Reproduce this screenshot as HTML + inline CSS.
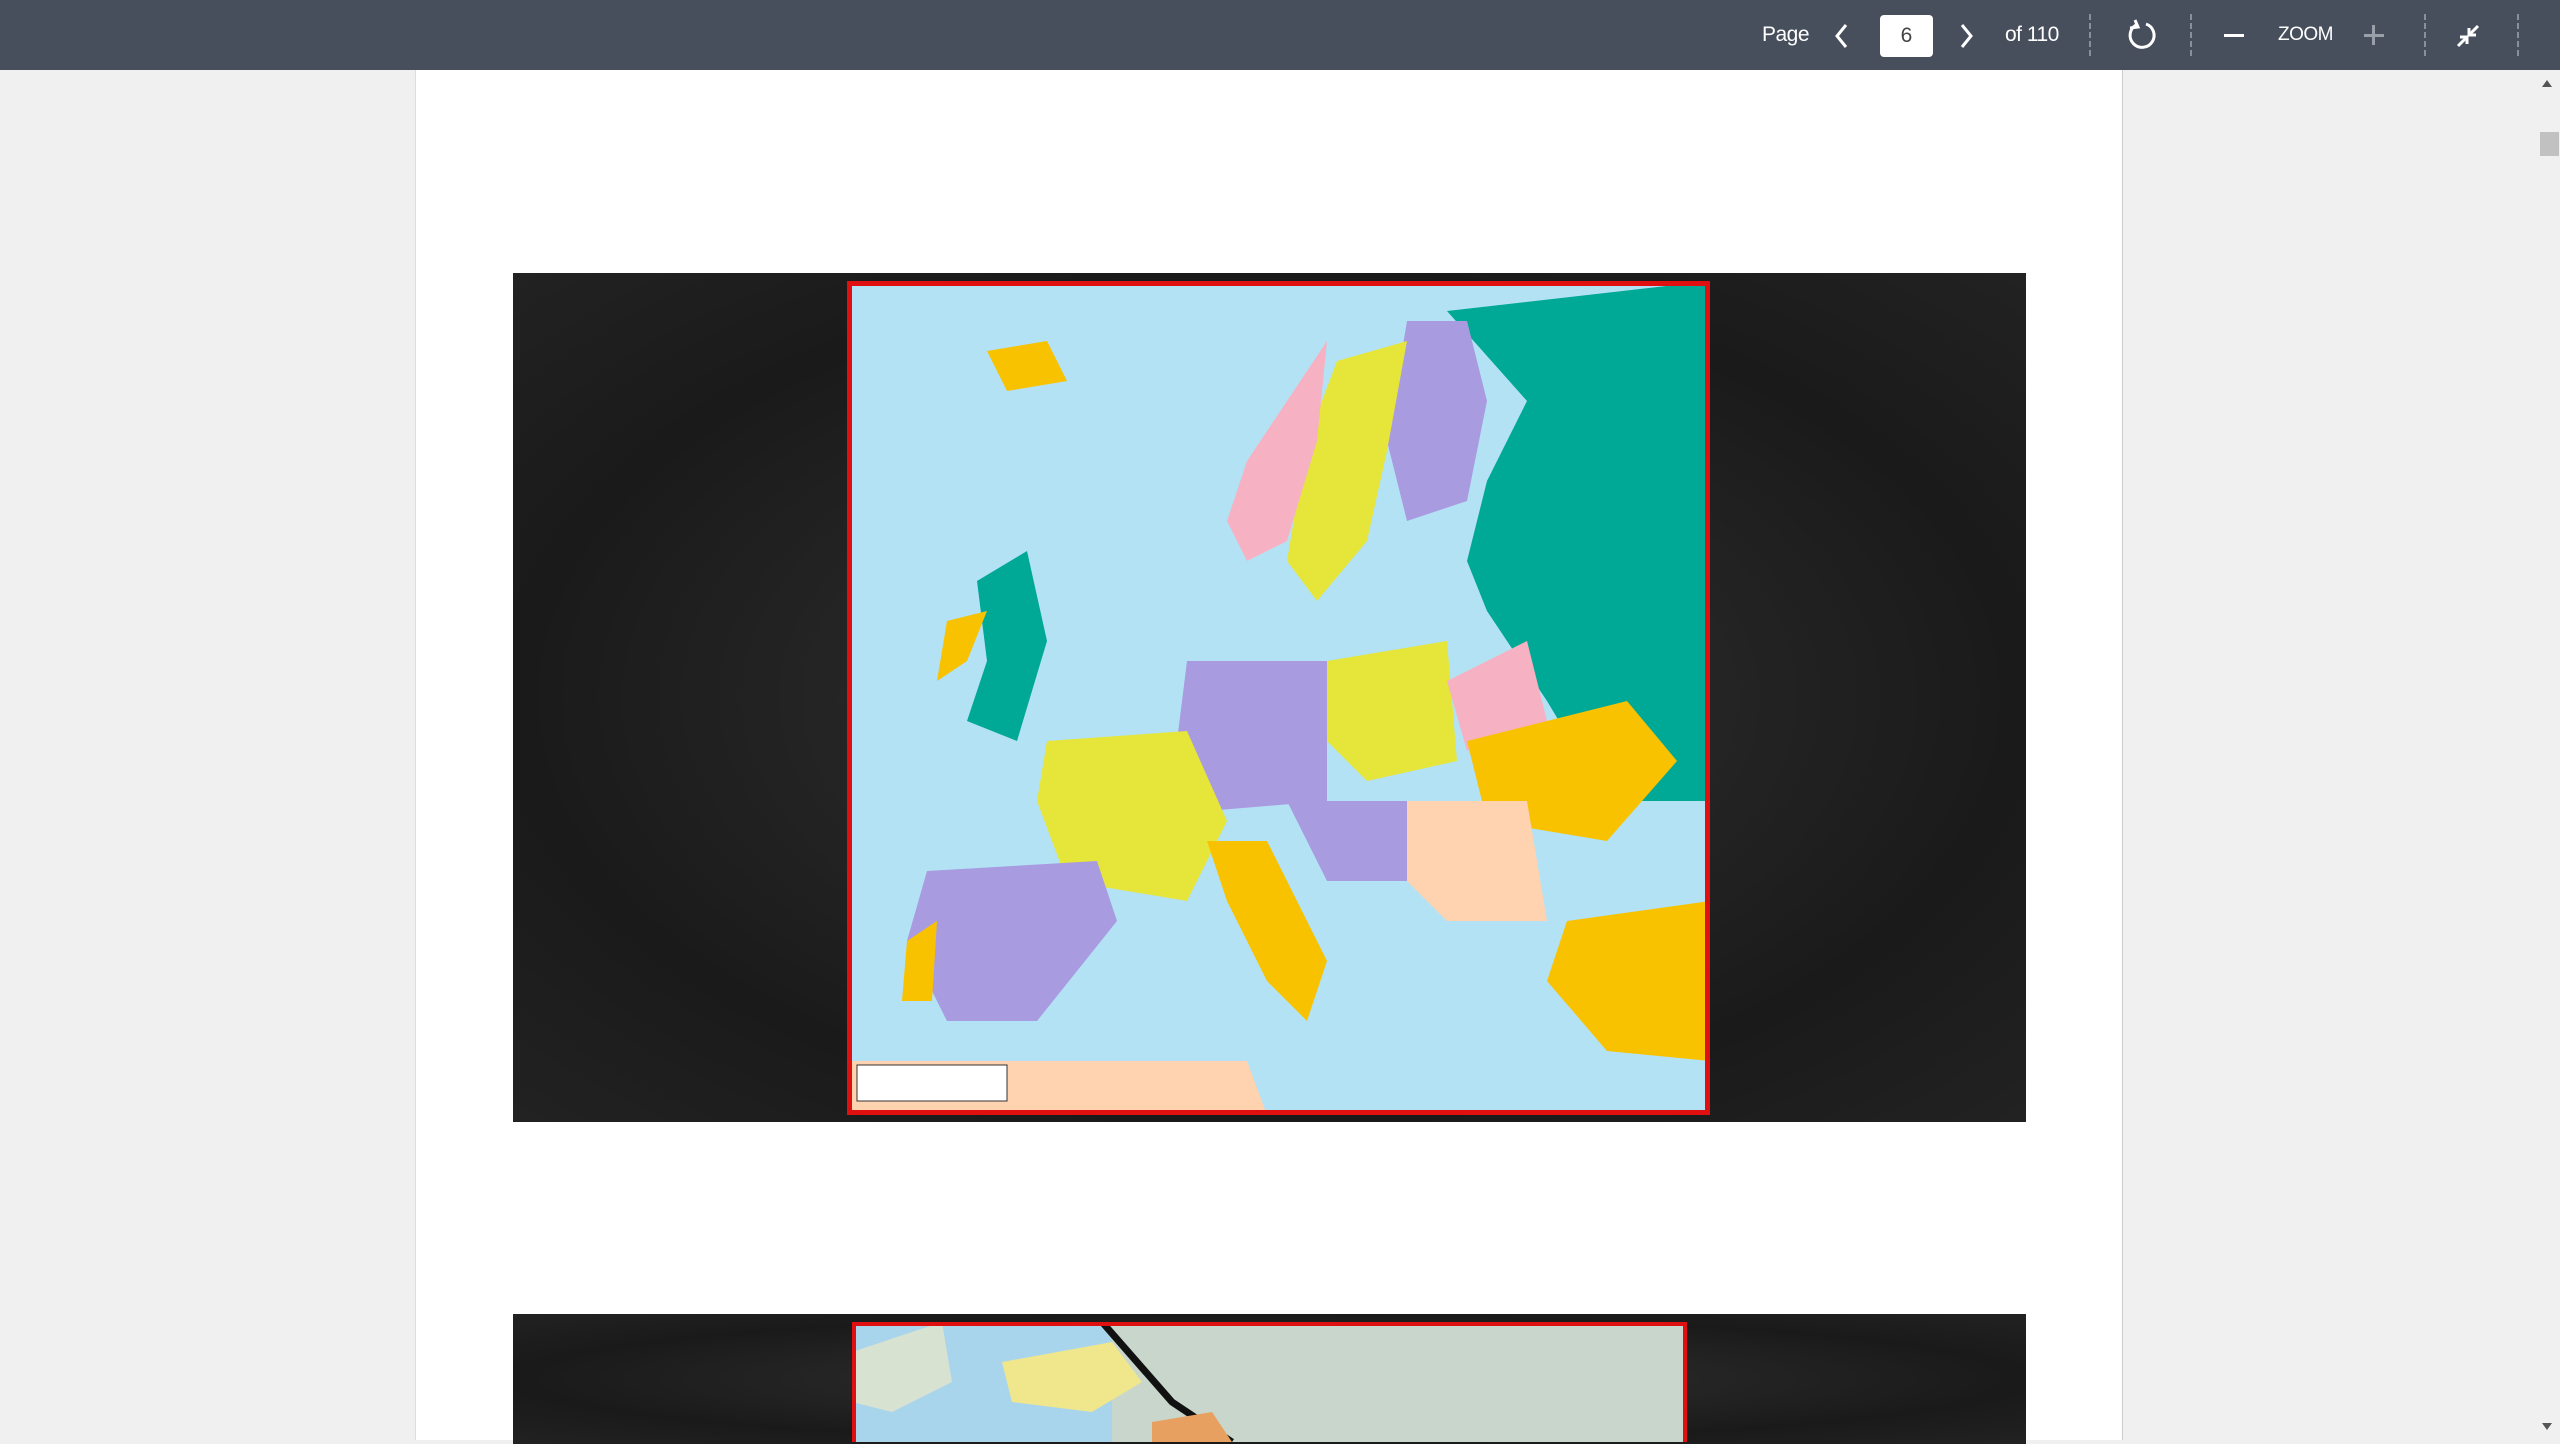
<!DOCTYPE html>
<html><head><meta charset="utf-8"><style>
*{margin:0;padding:0;box-sizing:border-box}
body{width:2560px;height:1440px;overflow:hidden;background:#f0f0f0;font-family:"Liberation Sans",sans-serif;position:relative}
.tb{position:absolute;left:0;top:0;width:2560px;height:70px;background:#474f5c}
.t{position:absolute;color:#fff;font-size:21px;top:23px;letter-spacing:-0.5px}
.dv{position:absolute;top:14px;height:42px;border-left:2px dashed #8a909a}
.page{position:absolute;left:415px;top:70px;width:1708px;height:1370px;background:#fff;border-right:1px solid #ccc;border-left:1px solid #ddd}
.dark{position:absolute;background:radial-gradient(ellipse at 50% 50%,#333,#1a1a1a 70%,#222)}
</style></head><body>
<div class="tb">
<div class="t" style="left:1762px">Page</div>
<svg style="position:absolute;left:1832px;top:22px" width="20" height="28"><path d="M14 3 L5 14 L14 25" stroke="#fff" stroke-width="3" fill="none"/></svg>
<div style="position:absolute;left:1880px;top:15px;width:53px;height:42px;background:#fff;border-radius:4px;color:#444;font-size:21px;text-align:center;line-height:42px">6</div>
<svg style="position:absolute;left:1956px;top:22px" width="20" height="28"><path d="M6 3 L15 14 L6 25" stroke="#fff" stroke-width="3" fill="none"/></svg>
<div class="t" style="left:2005px">of 110</div>
<div class="dv" style="left:2089px"></div>
<svg style="position:absolute;left:2126px;top:19px" width="32" height="32"><path d="M10 6 A12 12 0 1 0 20 5" stroke="#fff" stroke-width="3" fill="none"/><path d="M9 1 L12 8 L4 9" stroke="#fff" stroke-width="3" fill="none"/></svg>
<div class="dv" style="left:2190px"></div>
<div style="position:absolute;left:2224px;top:34px;width:20px;height:3px;background:#fff"></div>
<div class="t" style="left:2278px;font-size:19px;top:24px">ZOOM</div>
<div style="position:absolute;left:2364px;top:34px;width:20px;height:3px;background:#9aa0a8"></div>
<div style="position:absolute;left:2372px;top:25px;width:3px;height:20px;background:#9aa0a8"></div>
<div class="dv" style="left:2424px"></div>
<svg style="position:absolute;left:2454px;top:22px" width="28" height="28"><path d="M24 4 L15 13 M15 6 V13 H22 M4 24 L13 15 M6 15 H13 V22" stroke="#fff" stroke-width="3" fill="none"/></svg>
<div class="dv" style="left:2517px"></div>
</div>
<div class="page"></div>
<svg style="position:absolute;left:2540px;top:78px" width="14" height="10"><path d="M2 9 L7 2 L12 9Z" fill="#555"/></svg>
<div style="position:absolute;left:2540px;top:132px;width:19px;height:24px;background:#c1c1c1"></div>
<svg style="position:absolute;left:2540px;top:1422px" width="14" height="10"><path d="M2 1 L7 8 L12 1Z" fill="#555"/></svg>

<div class="dark" style="left:513px;top:273px;width:1513px;height:849px"></div>
<svg style="position:absolute;left:847px;top:281px" width="863" height="834" viewBox="0 0 863 834">
<rect width="863" height="834" fill="#b3e2f5"/>
<path d="M600 30 L863 0 L863 520 L760 520 L700 420 L640 330 L620 280 L640 200 L680 120 Z" fill="#00a896"/>
<path d="M560 40 L620 40 L640 120 L620 220 L560 240 L540 160 Z" fill="#a99be0"/>
<path d="M490 80 L560 60 L540 170 L520 260 L470 320 L440 280 L460 160 Z" fill="#e5e53a"/>
<path d="M400 180 L480 60 L470 160 L440 260 L400 280 L380 240 Z" fill="#f6b2c2"/>
<path d="M130 300 L180 270 L200 360 L170 460 L120 440 L140 380 Z" fill="#00a896"/>
<path d="M140 330 L120 380 L90 400 L100 340 Z" fill="#f8c200"/>
<path d="M340 380 L480 380 L480 520 L360 530 L330 460 Z" fill="#a99be0"/>
<path d="M480 380 L600 360 L610 480 L520 500 L480 460 Z" fill="#e5e53a"/>
<path d="M600 400 L680 360 L700 440 L620 470 Z" fill="#f6b2c2"/>
<path d="M620 460 L780 420 L830 480 L760 560 L640 540 Z" fill="#f8c200"/>
<path d="M200 460 L340 450 L380 540 L340 620 L220 600 L190 520 Z" fill="#e5e53a"/>
<path d="M80 590 L250 580 L270 640 L190 740 L100 740 L60 660 Z" fill="#a99be0"/>
<path d="M60 660 L90 640 L85 720 L55 720 Z" fill="#f8c200"/>
<path d="M360 560 L420 560 L480 680 L460 740 L420 700 L380 620 Z" fill="#f8c200"/>
<path d="M440 520 L560 520 L560 600 L480 600 Z" fill="#a99be0"/>
<path d="M560 520 L680 520 L700 640 L600 640 L560 600 Z" fill="#ffd2b0"/>
<path d="M720 640 L863 620 L863 780 L760 770 L700 700 Z" fill="#f8c200"/>
<path d="M140 70 L200 60 L220 100 L160 110 Z" fill="#f8c200"/>
<path d="M0 780 L400 780 L420 834 L0 834 Z" fill="#ffd2b0"/>
<rect x="10" y="784" width="150" height="36" fill="#fff" stroke="#333"/>
<rect x="2.5" y="2.5" width="858" height="829" fill="none" stroke="#e01010" stroke-width="5"/>
</svg>

<div class="dark" style="left:513px;top:1314px;width:1513px;height:130px"></div>
<svg style="position:absolute;left:852px;top:1322px" width="835" height="120" viewBox="0 0 835 120">
<rect width="835" height="120" fill="#c8d6cc"/>
<rect width="260" height="120" fill="#a8d4ec"/>
<path d="M150 40 L260 20 L290 60 L240 90 L160 80 Z" fill="#f0e68c"/>
<path d="M250 0 L320 80 L380 120" stroke="#111" stroke-width="7" fill="none"/>
<path d="M300 100 L360 90 L380 120 L300 120Z" fill="#e8a060"/>
<path d="M0 30 L90 0 L100 60 L40 90 L0 80Z" fill="#d8e2d0"/>
<path d="M2 120 V2 H833 V120" fill="none" stroke="#e01010" stroke-width="4"/>
</svg>
</body></html>
